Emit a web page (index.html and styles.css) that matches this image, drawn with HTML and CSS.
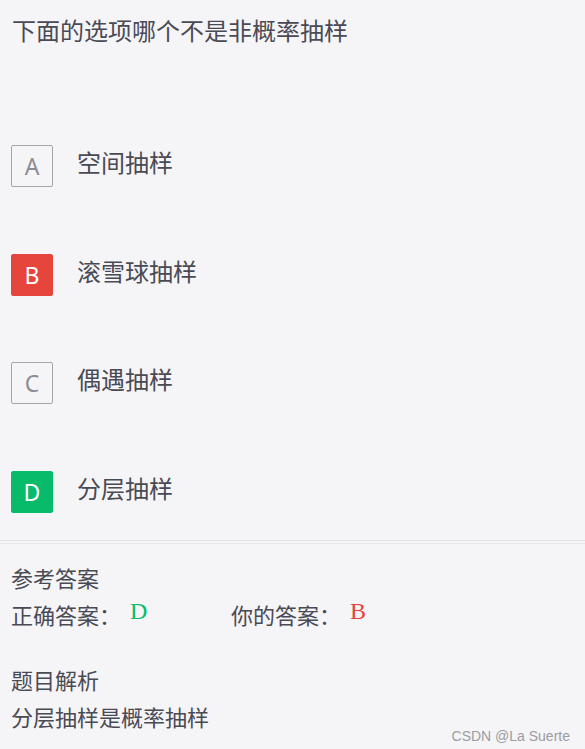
FILE: index.html
```html
<!DOCTYPE html>
<html lang="zh-CN">
<head>
<meta charset="utf-8">
<title>题目</title>
<link rel="stylesheet" href="styles.css">
</head>
<body>
<div class="page">
  <div class="title">下面的选项哪个不是非概率抽样</div>
  <div class="options">
    <div class="option"><span class="key">A</span><span class="label">空间抽样</span></div>
    <div class="option"><span class="key key-wrong">B</span><span class="label">滚雪球抽样</span></div>
    <div class="option"><span class="key">C</span><span class="label">偶遇抽样</span></div>
    <div class="option"><span class="key key-right">D</span><span class="label">分层抽样</span></div>
  </div>
  <div class="divider"></div>
  <div class="answer">
    <div class="line">参考答案</div>
    <div class="line">
      <span class="pair">正确答案：<span class="mark mark-right">D</span></span><span class="pair">你的答案：<span class="mark mark-wrong">B</span></span>
    </div>
    <div class="line analysis-head">题目解析</div>
    <div class="line">分层抽样是概率抽样</div>
  </div>
  <div class="watermark">CSDN @La Suerte</div>
</div>
</body>
</html>
```
FILE: styles.css
```css
html, body {
  margin: 0;
  padding: 0;
  background: #f5f5f7;
}
.page {
  position: relative;
  width: 585px;
  height: 749px;
  overflow: hidden;
  font-family: "Noto Sans CJK SC", "Noto Sans", sans-serif;
  color: #4a4a54;
}
.title {
  font-size: 24px;
  line-height: 36px;
  padding: 12px 12px 0;
}
.options {
  display: flex;
  flex-direction: column;
  gap: 66.5px;
  padding: 97px 11px 0;
}
.option {
  display: flex;
  align-items: center;
  height: 42px;
}
.key {
  box-sizing: border-box;
  width: 42px;
  height: 42px;
  border: 1px solid #a5a5ad;
  border-radius: 2px;
  display: flex;
  align-items: center;
  justify-content: center;
  font-family: "Noto Sans", sans-serif;
  font-size: 23px;
  color: #8c8c96;
}
.key-wrong {
  background: #e6453c;
  border-color: #e6453c;
  color: #fff;
}
.key-right {
  background: #08bb6b;
  border-color: #08bb6b;
  color: #fff;
}
.label {
  margin-left: 24px;
  font-size: 24px;
  line-height: 34px;
  padding-bottom: 8px;
}
.divider {
  margin-top: 27px;
  height: 2px;
  border-top: 1px solid #e2e2e8;
  border-bottom: 1px solid #e6e6ec;
}
.answer {
  padding: 15px 11px 0;
  font-size: 22px;
}
.line {
  line-height: 37px;
  height: 37px;
}
.analysis-head {
  margin-top: 28px;
}
.pair {
  display: inline-block;
  width: 220px;
}
.mark {
  font-family: "Liberation Serif", serif;
  font-size: 24px;
  margin-left: 9px;
  position: relative;
  top: -5px;
}
.mark-right { color: #08bb6b; }
.mark-wrong { color: #e6453c; }
.watermark {
  position: absolute;
  right: 15px;
  bottom: 5px;
  font-family: "Liberation Sans", sans-serif;
  font-size: 14px;
  color: #9c9ca2;
}
```
